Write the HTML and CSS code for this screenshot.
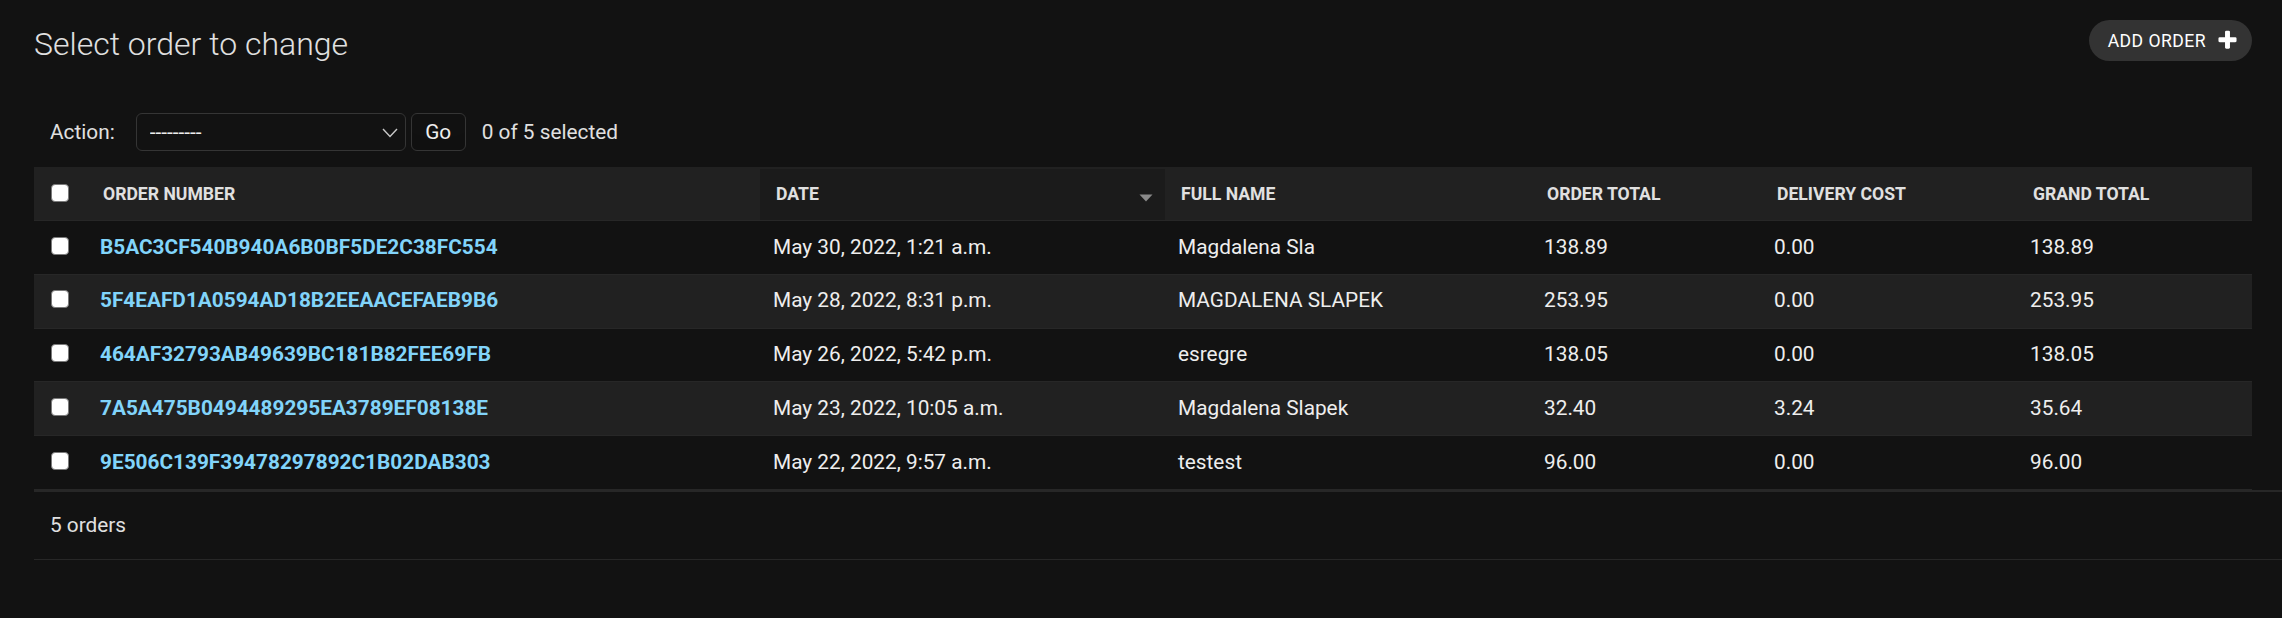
FILE: index.html
```html
<!DOCTYPE html>
<html lang="en">
<head>
<meta charset="utf-8">
<title>Select order to change</title>
<link rel="stylesheet" href="styles.css">
</head>
<body>
<div class="content">
  <div class="page-head">
    <h1 class="title">Select order to change</h1>
    <a class="add-btn" href="#">Add order
      <svg class="add-icon" viewBox="0 0 1792 1792" width="23" height="23" aria-hidden="true"><path fill="#ffffff" d="M1600 736v192q0 40-28 68t-68 28h-416v416q0 40-28 68t-68 28h-192q-40 0-68-28t-28-68v-416h-416q-40 0-68-28t-28-68v-192q0-40 28-68t68-28h416v-416q0-40 28-68t68-28h192q40 0 68 28t28 68v416h416q40 0 68 28t28 68z"/></svg>
    </a>
  </div>

  <div class="actions">
    <label class="action-label">Action:</label>
    <span class="select-wrap">
      <select class="action-select"><option>---------</option><option>Delete selected orders</option></select>
      <svg class="chev" viewBox="0 0 16 10" width="16" height="10" aria-hidden="true"><polyline points="1,1 8,8.5 15,1" fill="none" stroke="#c8c8c8" stroke-width="1.4"/></svg>
    </span>
    <button class="go" type="button">Go</button>
    <span class="counter">0 of 5 selected</span>
  </div>

  <table class="results">
    <colgroup>
      <col class="c-cb"><col class="c-num"><col class="c-date"><col class="c-name"><col class="c-total"><col class="c-del"><col class="c-grand">
    </colgroup>
    <thead>
      <tr>
        <th class="cb-col"><input type="checkbox" class="cb"></th>
        <th>Order number</th>
        <th class="sorted"><span class="sort-wrap">Date<svg class="sort-arrow" viewBox="0 0 14 8" width="14" height="8" aria-hidden="true"><polygon points="0.5,0.5 13.5,0.5 7,7.5" fill="#8a8a8a"/></svg></span></th>
        <th>Full name</th>
        <th>Order total</th>
        <th>Delivery cost</th>
        <th>Grand total</th>
      </tr>
    </thead>
    <tbody>
      <tr class="row1">
        <td class="cb-col"><input type="checkbox" class="cb"></td>
        <th class="field"><a href="#">B5AC3CF540B940A6B0BF5DE2C38FC554</a></th>
        <td>May 30, 2022, 1:21 a.m.</td>
        <td>Magdalena Sla</td>
        <td>138.89</td>
        <td>0.00</td>
        <td>138.89</td>
      </tr>
      <tr class="row2">
        <td class="cb-col"><input type="checkbox" class="cb"></td>
        <th class="field"><a href="#">5F4EAFD1A0594AD18B2EEAACEFAEB9B6</a></th>
        <td>May 28, 2022, 8:31 p.m.</td>
        <td>MAGDALENA SLAPEK</td>
        <td>253.95</td>
        <td>0.00</td>
        <td>253.95</td>
      </tr>
      <tr class="row1">
        <td class="cb-col"><input type="checkbox" class="cb"></td>
        <th class="field"><a href="#">464AF32793AB49639BC181B82FEE69FB</a></th>
        <td>May 26, 2022, 5:42 p.m.</td>
        <td>esregre</td>
        <td>138.05</td>
        <td>0.00</td>
        <td>138.05</td>
      </tr>
      <tr class="row2">
        <td class="cb-col"><input type="checkbox" class="cb"></td>
        <th class="field"><a href="#">7A5A475B0494489295EA3789EF08138E</a></th>
        <td>May 23, 2022, 10:05 a.m.</td>
        <td>Magdalena Slapek</td>
        <td>32.40</td>
        <td>3.24</td>
        <td>35.64</td>
      </tr>
      <tr class="row1">
        <td class="cb-col"><input type="checkbox" class="cb"></td>
        <th class="field"><a href="#">9E506C139F39478297892C1B02DAB303</a></th>
        <td>May 22, 2022, 9:57 a.m.</td>
        <td>testest</td>
        <td>96.00</td>
        <td>0.00</td>
        <td>96.00</td>
      </tr>
    </tbody>
  </table>

  <p class="paginator">5 orders</p>
</div>
</body>
</html>
```

FILE: styles.css
```css
html, body {
  margin: 0;
  padding: 0;
  background: #121212;
}

body {
  font-family: Roboto, "Liberation Sans", Arial, sans-serif;
  color: #eeeeee;
  font-size: 20.8px;
  width: 2282px;
  overflow: hidden;
}

.content {
  padding: 20px 30px 0 34px;
}

/* ---------- page head ---------- */
.page-head {
  display: flex;
  justify-content: space-between;
  align-items: flex-start;
  margin-bottom: 33.6px;
}

.title {
  margin: 5px 0 0;
  font-size: 32px;
  font-weight: 300;
  line-height: 38.4px;
  color: #e0e0e0;
}

.add-btn {
  display: flex;
  align-items: center;
  height: 41px;
  box-sizing: border-box;
  padding: 0 13px 0 19px;
  background: #333333;
  border-radius: 21px;
  color: #ffffff;
  text-decoration: none;
  font-size: 17.6px;
  font-weight: 400;
  letter-spacing: 0.45px;
  text-transform: uppercase;
}

.add-icon {
  margin-left: 10px;
}

/* ---------- actions ---------- */
.actions {
  display: flex;
  align-items: center;
  padding: 16px;
  height: 38.4px;
  color: #e0e0e0;
}

.action-label {
  margin-right: 21px;
}

.select-wrap {
  position: relative;
  display: block;
}

.action-select {
  appearance: none;
  -webkit-appearance: none;
  display: block;
  width: 270px;
  height: 38px;
  box-sizing: border-box;
  padding: 0 14px 0 13px;
  background: #121212;
  border: 1px solid #353535;
  border-radius: 6px;
  color: #eeeeee;
  font-family: Roboto, "Liberation Sans", Arial, sans-serif;
  font-size: 20.8px;
}

.chev {
  position: absolute;
  right: 8px;
  top: 15px;
  pointer-events: none;
}

.go {
  margin-left: 5px;
  width: 55px;
  height: 38px;
  box-sizing: border-box;
  padding: 0;
  background: #121212;
  border: 1px solid #353535;
  border-radius: 6px;
  color: #eeeeee;
  font-family: Roboto, "Liberation Sans", Arial, sans-serif;
  font-size: 20.8px;
  box-shadow: inset 0 -24px 32px -16px rgba(0, 0, 0, 0.15);
}

.counter {
  margin-left: 16px;
}

/* ---------- table ---------- */
.results {
  width: 2218px;
  table-layout: fixed;
  border-collapse: collapse;
  border-spacing: 0;
}

.c-cb { width: 53px; }
.c-num { width: 673px; }
.c-date { width: 405px; }
.c-name { width: 366px; }
.c-total { width: 230px; }
.c-del { width: 256px; }
.c-grand { width: 235px; }

thead th {
  background: #212121;
  color: #e0e0e0;
  font-size: 17.6px;
  font-weight: 700;
  text-transform: uppercase;
  text-align: left;
  line-height: 25.6px;
  padding: 13px 16px 12px;
  border-top: 2px solid #212121;
  border-bottom: 1px solid #272727;
  white-space: nowrap;
  vertical-align: top;
}

thead th.sorted {
  background: #1b1b1b;
}

.sort-wrap {
  display: flex;
  justify-content: space-between;
  align-items: center;
}

.sort-arrow {
  margin-right: -4px;
  margin-top: 5px;
}

tbody td,
tbody th.field {
  padding: 13.6px 13px;
  line-height: 25.6px;
  font-size: 20.8px;
  text-align: left;
  vertical-align: top;
  border-bottom: 1px solid #272727;
  white-space: nowrap;
  overflow: hidden;
}

tbody th.field {
  font-weight: 400;
}

tbody th.field a {
  color: #81d4fa;
  font-weight: 700;
  text-decoration: none;
}

tr.row1 { background: #121212; }
tr.row2 { background: #212121; }

.cb-col {
  padding-left: 0 !important;
  padding-right: 0 !important;
  text-align: center;
}

.cb {
  appearance: none;
  -webkit-appearance: none;
  display: block;
  width: 18px;
  height: 18px;
  box-sizing: border-box;
  margin: 2px auto 0 17px;
  background: #ffffff;
  border: 1.5px solid #7a7a7a;
  border-radius: 4px;
}

/* ---------- paginator ---------- */
.paginator {
  margin: 0 -30px 0 0;
  padding: 16px 16px;
  line-height: 35.2px;
  font-size: 20.8px;
  color: #e0e0e0;
  border-top: 2px solid #272727;
  border-bottom: 1px solid #272727;
}
```
